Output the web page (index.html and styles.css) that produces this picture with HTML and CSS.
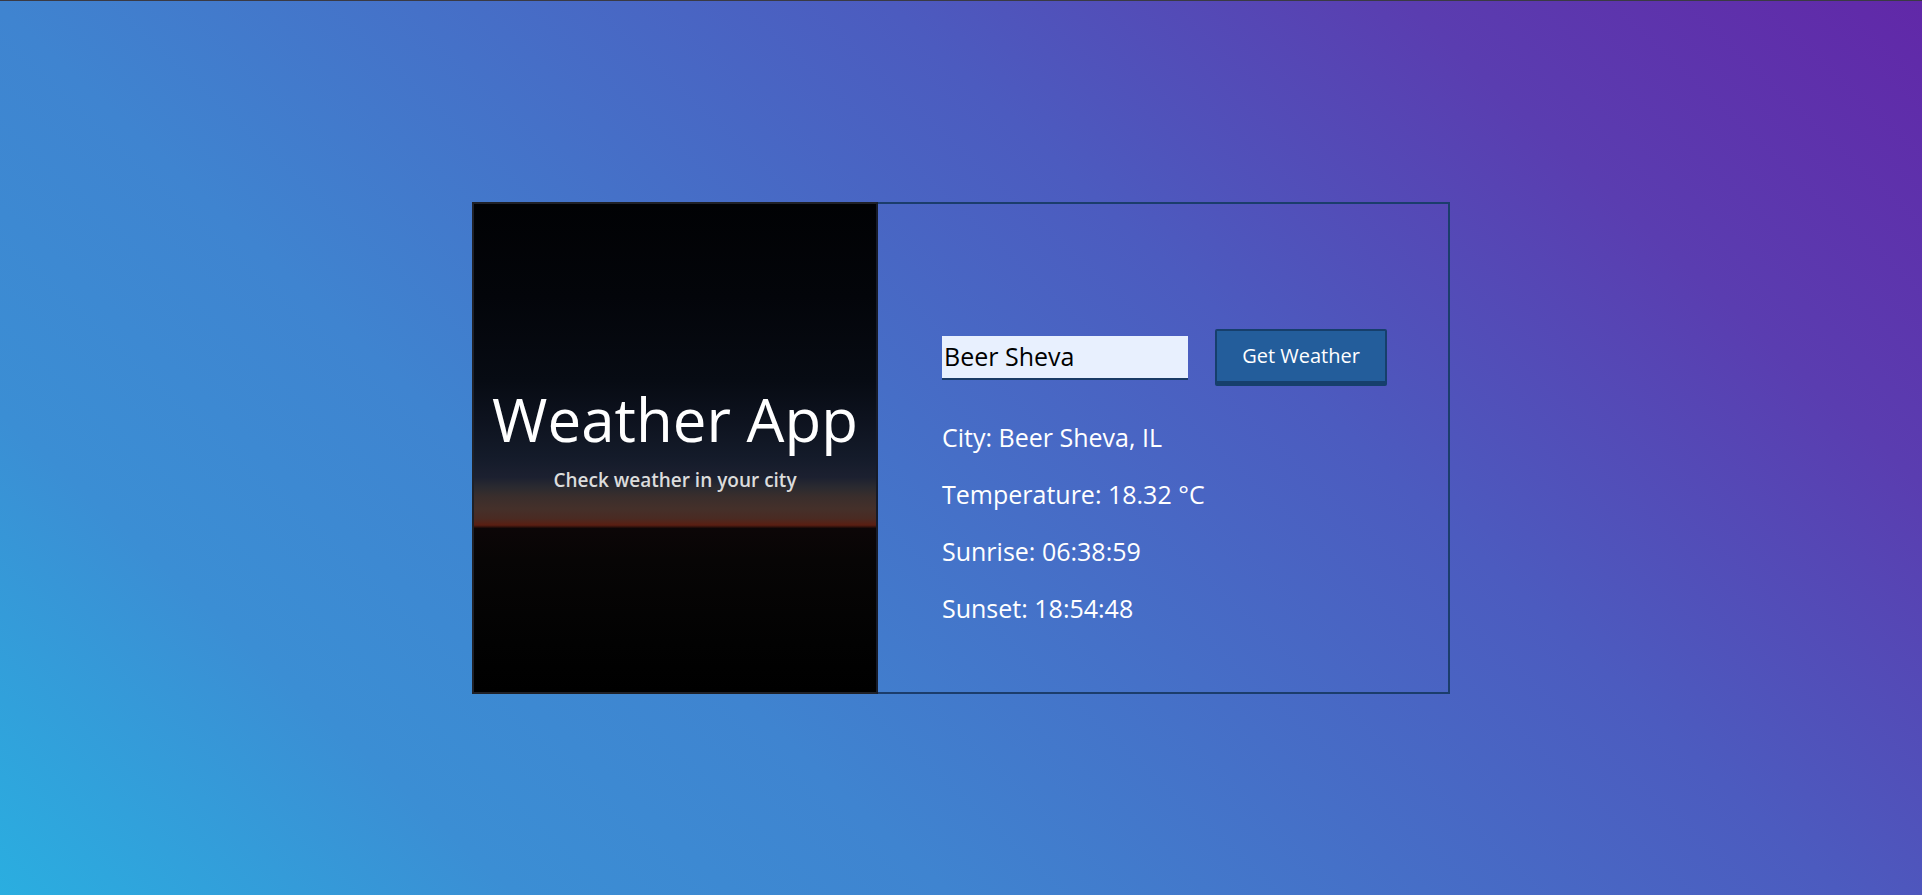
FILE: index.html
```html
<!DOCTYPE html>
<html lang="en">
<head>
<meta charset="utf-8">
<title>Weather App</title>
<link rel="stylesheet" href="styles.css">
</head>
<body>
<main class="page">
  <section class="card">
    <div class="hero">
      <h1 class="hero-title">Weather App</h1>
      <p class="hero-sub">Check weather in your city</p>
    </div>
    <div class="panel">
      <form class="search" onsubmit="return false">
        <input class="city-input" type="text" value="Beer Sheva">
        <button class="btn" type="submit">Get Weather</button>
      </form>
      <div class="info">
        <p class="info-line">City: Beer Sheva, IL</p>
        <p class="info-line">Temperature: 18.32 °C</p>
        <p class="info-line">Sunrise: 06:38:59</p>
        <p class="info-line">Sunset: 18:54:48</p>
      </div>
    </div>
  </section>
</main>
</body>
</html>
```

FILE: styles.css
```css
html, body {
  margin: 0;
  padding: 0;
  height: 100%;
}
body {
  font-family: "Open Sans", "Liberation Sans", sans-serif;
  background: linear-gradient(43deg,
    #2aaee0 0%,
    #3b8ed4 18%,
    #3f84d0 33%,
    #4c5bbf 64%,
    #5a3db0 82%,
    #6128a8 100%);
  border-top: 1px solid #3a3a44;
  box-sizing: border-box;
  overflow: hidden;
}
.page {
  height: 100%;
  display: flex;
  align-items: center;
  justify-content: center;
}
.card {
  width: 978px;
  height: 492px;
  display: flex;
}
.hero {
  width: 406px;
  flex: none;
  box-sizing: border-box;
  border: 2px solid #1f2128;
  border-right-color: #161b28;
  background:
    linear-gradient(180deg,
      #010204 0%,
      #03050a 19%,
      #070b13 36%,
      #0d121e 44%,
      #141b2a 52%,
      #1c2030 56%,
      #2a2a30 58%,
      #3a2e2c 60%,
      #45302a 62.5%,
      #4a2a22 64.5%,
      #5a1e12 65.8%,
      #0c0607 66.5%,
      #070505 73%,
      #020202 90%,
      #000 100%);
  display: flex;
  flex-direction: column;
  align-items: center;
  justify-content: center;
  color: #fff;
  padding-bottom: 20px;
}
.hero-title {
  margin: 0;
  font-weight: 400;
  font-size: 60px;
  line-height: 72px;
}
.hero-sub {
  margin: 12px 0 0;
  font-weight: 600;
  font-size: 19px;
  line-height: 26px;
  color: #dcdcdc;
}
.panel {
  flex: 1;
  box-sizing: border-box;
  border: 2px solid #1b3d6c;
  border-left: none;
  padding: 125px 0 0 64px;
  color: #fff;
}
.search {
  display: flex;
  align-items: center;
  gap: 27px;
}
.city-input {
  width: 246px;
  height: 44px;
  box-sizing: border-box;
  border: none;
  border-bottom: 2px solid #1a3b66;
  background: #e8f0fe;
  font-family: "Open Sans", "Liberation Sans", sans-serif;
  font-size: 25px;
  color: #000;
  padding: 0 2px 2px;
  outline: none;
}
.btn {
  width: 172px;
  height: 57px;
  box-sizing: border-box;
  background: #235d9b;
  border: 2px solid #163f6c;
  border-bottom-width: 5px;
  border-radius: 2px;
  color: #fff;
  font-family: "Open Sans", "Liberation Sans", sans-serif;
  font-size: 20px;
  padding: 0 0 2px;
}
.info {
  margin-top: 23px;
}
.info-line {
  margin: 0;
  font-size: 25px;
  line-height: 57px;
}
```
